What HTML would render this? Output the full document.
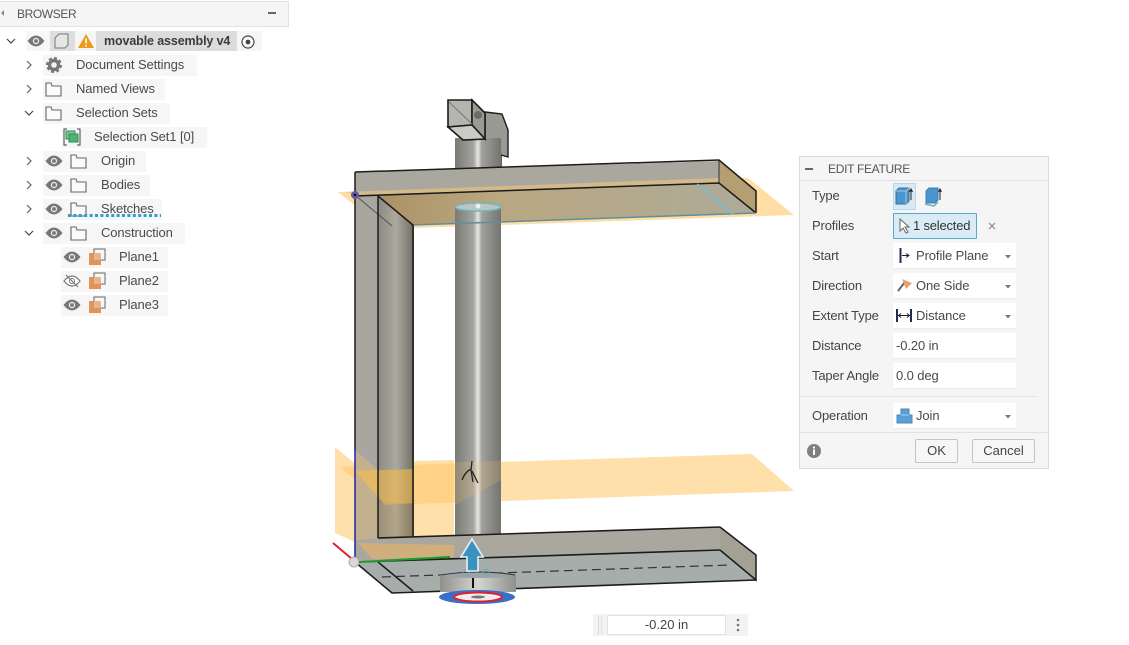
<!DOCTYPE html>
<html><head><meta charset="utf-8"><style>
html,body{margin:0;padding:0;background:#fff;width:1129px;height:645px;overflow:hidden}
body{position:relative;font-family:"Liberation Sans",sans-serif;font-size:13px;color:#4a4a4a}
.a{position:absolute}
.t{position:absolute;white-space:nowrap;line-height:18px;letter-spacing:-.1px}
.bg{position:absolute;background:#f6f6f6;height:21px}
.c{position:absolute;left:893px;width:123px;height:25px;background:#fff;border-bottom:1px solid #ececec}
.l{position:absolute;left:812px;white-space:nowrap;line-height:18px;letter-spacing:-.15px;color:#444}
.b{position:absolute;top:439px;height:22px;background:#f6f6f6;border:1px solid #c4c4c4;border-radius:2px;text-align:center;line-height:22px;color:#444}
svg{position:absolute;left:0;top:0}
</style></head><body>

<svg width="1129" height="645" viewBox="0 0 1129 645" fill="none" style="filter:blur(.35px)">
<defs>
<linearGradient id="cy" x1="0" x2="1" y1="0" y2="0"><stop offset="0" stop-color="#7b7b75"/><stop offset=".4" stop-color="#a3a3a0"/><stop offset=".5" stop-color="#e6e6e2"/><stop offset=".58" stop-color="#a0a09c"/><stop offset="1" stop-color="#74746f"/></linearGradient>
<linearGradient id="cz" x1="0" x2="1" y1="0" y2="0"><stop offset="0" stop-color="#8c8a80"/><stop offset=".5" stop-color="#aca99f"/><stop offset="1" stop-color="#6f6d64"/></linearGradient>
<linearGradient id="dk" x1="0" x2="1" y1="0" y2="0"><stop offset="0" stop-color="#8f8f8c"/><stop offset=".5" stop-color="#d5d5d2"/><stop offset="1" stop-color="#8f8f8c"/></linearGradient>
<linearGradient id="ug" x1="0" x2="1" y1="0" y2="0"><stop offset="0" stop-color="#a98e5f"/><stop offset=".35" stop-color="#b9a781"/><stop offset="1" stop-color="#aeab98"/></linearGradient>
</defs>

<!-- back blocks -->
<polygon points="485,112 502,114 508,130 508,157 501,155 501,170 485,170" fill="#9a9a94" stroke="#1c1c1c" stroke-width="1.4"/>
<rect x="455" y="138" width="46" height="34" fill="url(#cy)"/>
<polygon points="448,100 472,100 472,125 448,127" fill="#b5b5af" stroke="#1c1c1c" stroke-width="1.6"/>
<polygon points="472,100 485,113 485,139 472,125" fill="#9b9b94" stroke="#1c1c1c" stroke-width="1.6"/>
<polygon points="448,127 472,125 485,139 463,140" fill="#cbcbc6" stroke="#1c1c1c" stroke-width="1.6"/>
<line x1="449" y1="102" x2="472" y2="124" stroke="#777" stroke-width="1"/>
<circle cx="478" cy="115" r="4" fill="#6c6c66"/>

<!-- planes on white -->
<polygon points="335,447 353,462 454,460 454,545 452,557 390,558 335,533" fill="#ffc766" opacity=".55"/>
<polygon points="338,192 748,178 794,215 385,229" fill="#ffc766" opacity=".58"/>
<polygon points="340,467 752,454 794,491 385,505" fill="#ffc766" opacity=".55"/>

<!-- top underside -->
<polygon points="355,195 719,183 756,213 413,225 392,228" fill="url(#ug)"/>

<!-- column -->
<polygon points="355,172 378,172 378,562 355,562" fill="#a9a69f"/>
<polygon points="378,195 414,225 414,536 378,538" fill="url(#cz)"/>
<polygon points="355,450 378,470 378,545 355,545" fill="#ffc766" opacity=".3"/>
<polygon points="355,471 414,469 414,503 385,505" fill="#ffc044" opacity=".55"/>
<polygon points="378,503 414,503 414,536 378,538" fill="#c79a52" opacity=".25"/>
<!-- cylinder -->
<rect x="455" y="206" width="46" height="330" fill="url(#cy)"/>
<polygon points="455,462 501,461 501,480 455,505" fill="#ffc766" opacity=".18"/>
<ellipse cx="478" cy="207" rx="23" ry="4" fill="#b8c6c4" stroke="#75b3bd" stroke-width="1.5"/>
<circle cx="478" cy="206" r="2.5" fill="#eee"/>

<!-- top arm -->
<polygon points="355,172 719,161 719,183 355,195" fill="#aaa79f"/>
<polygon points="719,161 756,191 756,213 719,183" fill="#b59e71"/>
<polygon points="345,192 719,178 719,183 355,195" fill="#e6c081" opacity=".7"/>
<polyline points="355,172 719,160 756,191 756,213" stroke="#1b1b1b" stroke-width="1.5"/>
<line x1="719" y1="161" x2="719" y2="183" stroke="#333" stroke-width="1"/>
<polyline points="355,196 719,183 756,213" stroke="#1b1b1b" stroke-width="1.5"/>
<line x1="413" y1="225" x2="756" y2="213" stroke="#5f8f9c" stroke-width="1.5"/>
<line x1="697" y1="184" x2="733" y2="214" stroke="#7bbad0" stroke-width="2"/>
<line x1="355" y1="195" x2="392" y2="226" stroke="#55524a" stroke-width="1"/>
<polyline points="378,196 413,225 413,536" stroke="#1b1b1b" stroke-width="1.5"/>
<line x1="378" y1="196" x2="378" y2="538" stroke="#1b1b1b" stroke-width="1.5"/>
<line x1="355" y1="172" x2="355" y2="450" stroke="#1b1b1b" stroke-width="1.5"/>

<!-- bottom arm -->
<polygon points="378,538 720,527 720,550 355,562 355,540" fill="#aaa79f"/>
<polygon points="720,527 756,555 756,580 720,550" fill="#a3a094"/>
<polygon points="355,562 720,550 756,580 392,593" fill="#a6adab"/>
<line x1="378" y1="538" x2="720" y2="527" stroke="#1b1b1b" stroke-width="1.6"/>
<polyline points="720,527 756,555 756,580 720,550" stroke="#1b1b1b" stroke-width="1.5"/>
<line x1="355" y1="562" x2="720" y2="550" stroke="#1b1b1b" stroke-width="1.6"/>
<polyline points="355,562 392,593 756,580" stroke="#1b1b1b" stroke-width="1.6"/>
<line x1="378" y1="562" x2="413" y2="591" stroke="#1b1b1b" stroke-width="1.5"/>
<line x1="382" y1="577" x2="730" y2="565" stroke="#333" stroke-width="1.2" stroke-dasharray="9 5"/>

<polygon points="358,543 454,545 454,557 372,559" fill="#eeb75f" opacity=".55"/>

<!-- axes -->
<line x1="355" y1="449" x2="355" y2="558" stroke="#2b2ba8" stroke-width="1.6"/>
<line x1="333" y1="543" x2="352" y2="559" stroke="#e0222a" stroke-width="2"/>
<line x1="360" y1="562" x2="450" y2="557" stroke="#1f9a2a" stroke-width="2"/>
<circle cx="354" cy="562" r="5" fill="#dcd6d6" stroke="#aaa" stroke-width="1"/>
<circle cx="355" cy="195" r="4" fill="#6a5ca8"/><circle cx="355" cy="195" r="1.4" fill="#111"/>

<!-- cursor-like glyph -->
<path d="M472 461 L471 470 L473 482 M471 469 Q465 472 462 480 M472 471 L478 483" stroke="#222" stroke-width="1.3"/>

<!-- gizmo -->
<rect x="440" y="575" width="76" height="17" fill="url(#dk)"/>
<ellipse cx="478" cy="575" rx="37" ry="3" fill="#9aa3a6"/>
<path d="M441 575 Q478 569 515 575" stroke="#333" stroke-width="1"/>
<ellipse cx="477" cy="597" rx="38" ry="7" fill="#3a6fc8"/>
<ellipse cx="478" cy="597" rx="24" ry="4.5" fill="#eee" stroke="#e0202c" stroke-width="2"/>
<ellipse cx="478" cy="597" rx="7" ry="1.5" fill="#777"/>
<line x1="473" y1="578" x2="473" y2="588" stroke="#111" stroke-width="2"/>
<circle cx="466" cy="573" r="3" stroke="#6ea7c4" stroke-width="1"/><circle cx="486" cy="572" r="3" stroke="#6ea7c4" stroke-width="1"/>
<path d="M472 539 L483 557 L478 557 L478 571 L467 571 L467 557 L461 557 Z" fill="#3a92c0" stroke="#e8f0f4" stroke-width="1.6"/>
</svg>

<!-- BROWSER -->
<div class="a" style="left:0;top:1px;width:288px;height:24px;background:#f5f5f5;border:1px solid #e2e2e2;border-left:0"></div>
<div class="t" style="left:17px;top:5px;font-size:12px;color:#555;letter-spacing:-.4px">BROWSER</div>
<div class="a" style="left:268px;top:12px;width:8px;height:2px;background:#666"></div>
<div class="a" style="left:1px;top:10px;width:0;height:0;border:3px solid transparent;border-right:3px solid #888;border-left:0"></div>

<div class="bg" style="left:26px;top:31px;width:236px;height:20px"></div>
<div class="a" style="left:50px;top:31px;width:25px;height:20px;background:#dedede"></div>
<div class="a" style="left:96px;top:31px;width:141px;height:20px;background:#dcdcdc"></div>
<div class="bg" style="left:43px;top:55px;width:154px"></div>
<div class="bg" style="left:43px;top:79px;width:122px"></div>
<div class="bg" style="left:43px;top:103px;width:127px"></div>
<div class="bg" style="left:62px;top:127px;width:145px"></div>
<div class="bg" style="left:43px;top:151px;width:103px"></div>
<div class="bg" style="left:43px;top:175px;width:107px"></div>
<div class="bg" style="left:43px;top:199px;width:119px"></div>
<div class="bg" style="left:43px;top:223px;width:142px"></div>
<div class="bg" style="left:61px;top:247px;width:107px"></div>
<div class="bg" style="left:61px;top:271px;width:107px"></div>
<div class="bg" style="left:61px;top:295px;width:107px"></div>

<div class="t" style="left:104px;top:32px;font-weight:bold;color:#3c3c3c;letter-spacing:-.12px;font-size:12.5px">movable assembly v4</div>
<div class="t" style="left:76px;top:56px">Document Settings</div>
<div class="t" style="left:76px;top:80px">Named Views</div>
<div class="t" style="left:76px;top:104px">Selection Sets</div>
<div class="t" style="left:94px;top:128px">Selection Set1 [0]</div>
<div class="t" style="left:101px;top:152px">Origin</div>
<div class="t" style="left:101px;top:176px">Bodies</div>
<div class="t" style="left:101px;top:200px">Sketches</div>
<div class="t" style="left:101px;top:224px">Construction</div>
<div class="t" style="left:119px;top:248px">Plane1</div>
<div class="t" style="left:119px;top:272px">Plane2</div>
<div class="t" style="left:119px;top:296px">Plane3</div>

<svg width="300" height="320" viewBox="0 0 300 320" fill="none">
<defs>
<g id="eye"><path d="M-8.5 0 Q0 -11 8.5 0 Q0 11 -8.5 0Z" fill="#777"/><circle r="3.2" fill="#e8e8e8"/><circle r="1.9" fill="#777"/></g>
<path id="fold" d="M-7 -6 V7 H8 V-3 H-1 L-2 -6 Z" stroke="#666" stroke-width="1.1" fill="#fbfbfb"/>
<g id="pl"><path d="M-2 -4 V-8 H9 V3 H5" stroke="#666" stroke-width="1"/><rect x="-7" y="-4" width="12" height="12" fill="#e0935a"/><rect x="-2" y="-4" width="7" height="7" fill="#eab58a"/></g>
<path id="cr" d="M-2 -4 L2 0 L-2 4" stroke="#666" stroke-width="1.2"/>
<path id="dn" d="M-4 -2 L0 2 L4 -2" stroke="#444" stroke-width="1.2"/>
</defs>
<use href="#dn" x="11" y="41"/>
<use href="#eye" x="36" y="41"/>
<path d="M55 38 L59 34 H68 V45 L65 48 H55 Z" stroke="#777" stroke-width="1" fill="#e6e6e6"/>
<path d="M86 34 L94 48 H78 Z" fill="#ee9a1f"/><rect x="85.2" y="38.5" width="1.6" height="5" fill="#fff"/><rect x="85.2" y="45" width="1.6" height="1.6" fill="#fff"/>
<circle cx="248" cy="42" r="6" stroke="#444" stroke-width="1.2" fill="#fff"/><circle cx="248" cy="42" r="2.4" fill="#444"/>
<use href="#cr" x="29" y="65"/><use href="#cr" x="29" y="89"/><use href="#dn" x="29" y="113"/>
<use href="#cr" x="29" y="161"/><use href="#cr" x="29" y="185"/><use href="#cr" x="29" y="209"/><use href="#dn" x="29" y="233"/>
<g transform="translate(54,65)"><circle r="4.5" stroke="#777" stroke-width="3.4" fill="none"/><circle r="6.8" stroke="#777" stroke-width="2.4" stroke-dasharray="3 2.3" fill="none"/></g>
<use href="#fold" x="53" y="89"/><use href="#fold" x="53" y="113"/>
<path d="M67 129 H64 V145 H67 M77 129 H80 V145 H77" stroke="#444" stroke-width="1"/><rect x="66" y="131" width="9" height="8" fill="#7fc79a" stroke="#2e8f57"/><rect x="69" y="134" width="9" height="8" fill="#4fb36e" stroke="#2e8f57"/>
<use href="#eye" x="54" y="161"/><use href="#fold" x="78" y="161"/>
<use href="#eye" x="54" y="185"/><use href="#fold" x="78" y="185"/>
<use href="#eye" x="54" y="209"/><use href="#fold" x="78" y="209"/>
<use href="#eye" x="54" y="233"/><use href="#fold" x="78" y="233"/>
<use href="#eye" x="72" y="257"/><use href="#pl" x="96" y="257"/>
<g transform="translate(72,281)"><path d="M-8 0 Q0 -10 8 0 Q0 10 -8 0Z" stroke="#7a7a7a" stroke-width="1.2" fill="#fff"/><circle r="2.5" stroke="#7a7a7a"/><path d="M-6 -6 L6 6" stroke="#7a7a7a" stroke-width="1.2"/></g>
<use href="#pl" x="96" y="281"/>
<use href="#eye" x="72" y="305"/><use href="#pl" x="96" y="305"/>
<path d="M68 215.5 L161 215.5" stroke="#2c9ed4" stroke-width="3" stroke-dasharray="3 2.4"/>
</svg>

<!-- EDIT FEATURE -->
<div class="a" style="left:799px;top:156px;width:248px;height:311px;background:#f5f5f5;border:1px solid #dcdcdc"></div>
<div class="a" style="left:800px;top:180px;width:248px;height:1px;background:#e2e2e2"></div>
<div class="a" style="left:805px;top:168px;width:8px;height:2px;background:#666"></div>
<div class="t" style="left:828px;top:160px;font-size:12px;color:#555;letter-spacing:-.3px">EDIT FEATURE</div>

<div class="l" style="top:187px">Type</div>
<div class="l" style="top:217px">Profiles</div>
<div class="l" style="top:247px">Start</div>
<div class="l" style="top:277px">Direction</div>
<div class="l" style="top:307px">Extent Type</div>
<div class="l" style="top:337px">Distance</div>
<div class="l" style="top:367px">Taper Angle</div>
<div class="l" style="top:407px">Operation</div>

<div class="a" style="left:893px;top:183px;width:21px;height:25px;background:#d8e9f3;border:1px solid #b9d9ea"></div>
<div class="a" style="left:893px;top:213px;width:82px;height:24px;background:#d9ebf5;border:1.5px solid #58a9cf;border-radius:1px"></div>
<div class="t" style="left:913px;top:217px;color:#333;letter-spacing:-.2px">1 selected</div>
<div class="c" style="top:243px"></div><div class="c" style="top:273px"></div><div class="c" style="top:303px"></div>
<div class="c" style="top:333px"></div><div class="c" style="top:363px"></div><div class="c" style="top:403px"></div>
<div class="t" style="left:916px;top:247px">Profile Plane</div>
<div class="t" style="left:916px;top:277px">One Side</div>
<div class="t" style="left:916px;top:307px">Distance</div>
<div class="t" style="left:896px;top:337px">-0.20 in</div>
<div class="t" style="left:896px;top:367px">0.0 deg</div>
<div class="t" style="left:916px;top:407px">Join</div>
<div class="a" style="left:800px;top:396px;width:236px;height:1px;background:#e4e4e4"></div>
<div class="a" style="left:800px;top:432px;width:248px;height:1px;background:#e2e2e2"></div>
<div class="b" style="left:915px;width:41px">OK</div>
<div class="b" style="left:972px;width:61px">Cancel</div>

<!-- mini input -->
<div class="a" style="left:593px;top:614px;width:155px;height:22px;background:#f3f3f3"></div>
<div class="a" style="left:598px;top:616px;width:6px;height:18px;background:repeating-linear-gradient(90deg,#ddd 0 1px,#f3f3f3 1px 3px)"></div>
<div class="a" style="left:607px;top:615px;width:117px;height:18px;background:#fff;border:1px solid #e2e2e2;text-align:center;line-height:18px;color:#444">-0.20 in</div>

<svg width="1129" height="645" viewBox="0 0 1129 645" fill="none">
<path d="M896 191 L899 188 H909 V201 L906 204 H896 Z" fill="#4a95d0" stroke="#3a6f96"/><path d="M896 191 H906 V204 M906 191 L909 188" stroke="#9cc8e8"/>
<path d="M911 200 V190 M909.5 192 L911 189 L912.5 192" stroke="#222" stroke-width="1"/>
<path d="M926 191 L929 188 H938 V200 L935 203 H926 Z" fill="#4a95d0" stroke="#3a7fb0"/><path d="M925 204 L934 206 L938 202" stroke="#7fa9c4" stroke-width="1.5"/>
<path d="M940 200 V190 M938.5 192 L940 189 L941.5 192" stroke="#222" stroke-width="1"/>
<path d="M900 219 V231 L903 228 L906 233 L908 232 L905 227 L909 227 Z" fill="#fff" stroke="#666" stroke-width="1"/>
<path d="M989 223 L995 229 M995 223 L989 229" stroke="#888" stroke-width="1.2"/>
<path d="M900.5 248 V263" stroke="#1f2c50" stroke-width="2"/><path d="M902 255.5 H908 M906 253.5 L909 255.5 L906 257.5" stroke="#222"/>
<path d="M898 291 L905 282" stroke="#666" stroke-width="2"/><path d="M902 279 L912 283 L906 289 Z" fill="#e8a070"/>
<path d="M897 309 V322 M911 309 V322" stroke="#1f2c50" stroke-width="2"/><path d="M899 315.5 H909 M901 313.5 L898.5 315.5 L901 317.5 M907 313.5 L909.5 315.5 L907 317.5" stroke="#222"/>
<path d="M897 423 V415 H901 V409 H909 V415 H912 V423 Z" fill="#5a9fd6" stroke="#4a88b8"/><path d="M901 415 H909" stroke="#a9cfe9"/>
<path d="M1005 255 h6 l-3 3.5 z M1005 285 h6 l-3 3.5 z M1005 315 h6 l-3 3.5 z M1005 415 h6 l-3 3.5 z" fill="#777"/>
<circle cx="814" cy="451" r="7" fill="#808080"/><rect x="813" y="449.5" width="2" height="5.5" fill="#fff"/><rect x="813" y="446.5" width="2" height="2" fill="#fff"/>
<circle cx="738" cy="620" r="1.3" fill="#777"/><circle cx="738" cy="625" r="1.3" fill="#777"/><circle cx="738" cy="630" r="1.3" fill="#777"/>
</svg>
</body></html>
